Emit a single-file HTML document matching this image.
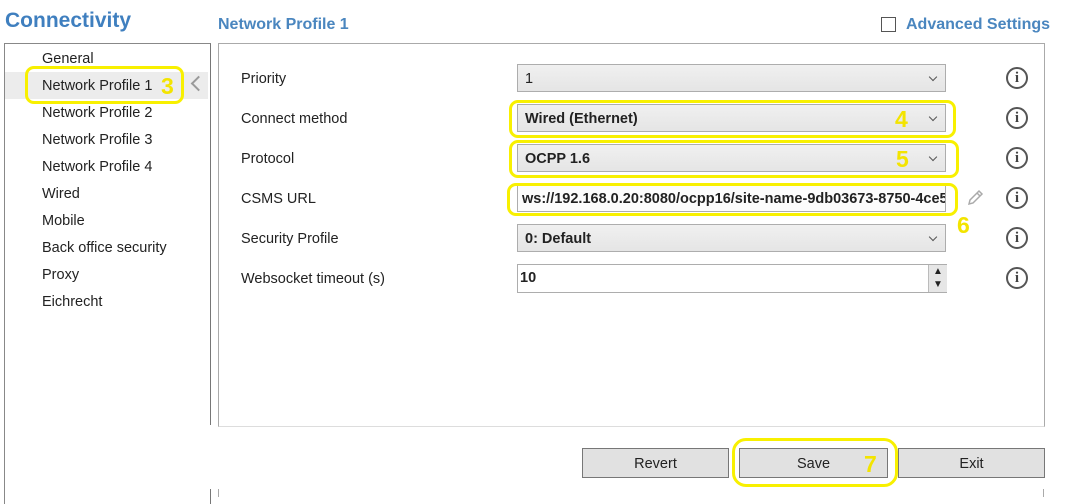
<!DOCTYPE html>
<html><head><style>
body{margin:0;width:1067px;height:497px;background:#fff;font-family:"Liberation Sans",sans-serif;position:relative;overflow:hidden;font-size:14.5px;color:#222}
.a{position:absolute}
.h1{left:5px;top:9px;font-size:21px;font-weight:bold;color:#3f7fbf}
.h2{left:218px;top:16px;font-size:16px;font-weight:bold;color:#4a86bf}
.nav{left:42px;font-size:14.5px}
.lbl{left:241px;font-size:14.5px}
.sel{left:517px;width:429px;height:28px;border:1px solid #adadad;background:linear-gradient(#f0f0f0,#e5e5e5);box-sizing:border-box;padding:6px 7px;font-size:14.5px}
.sel:after{content:"";position:absolute;right:9px;top:9px;width:5px;height:5px;border-right:1.3px solid #555;border-bottom:1.3px solid #555;transform:rotate(45deg)}
.info{left:1006px;width:18px;height:18px;border:2px solid #555;border-radius:50%;text-align:center;font:bold 15px/18px "Liberation Serif",serif;color:#444}
.y{border:3.5px solid #f8f000;border-radius:9px;box-sizing:border-box}
.num{color:#f3e400;font-weight:bold;font-size:23px}
.btn{top:448px;height:30px;background:#e1e1e1;border:1px solid #777;box-sizing:border-box;text-align:center;line-height:30px;font-size:14.5px}
</style></head><body>
<div class="a h1">Connectivity</div>
<div class="a h2">Network Profile 1</div>
<div class="a" style="left:881px;top:17px;width:13px;height:13px;border:1px solid #555"></div>
<div class="a" style="left:906px;top:16px;font-size:16px;font-weight:bold;color:#4a86bf">Advanced Settings</div>
<div class="a" style="left:4px;top:43px;width:205px;height:460px;border:1px solid #888;border-bottom:none;border-right-color:#777"></div>
<div class="a" style="left:209px;top:425px;width:3px;height:64px;background:#fff"></div>
<div class="a" style="left:5px;top:72px;width:203px;height:27px;background:#ececec"></div>
<div class="a" style="left:193px;top:78px;width:9px;height:9px;border-left:2.5px solid #999;border-bottom:2.5px solid #999;transform:rotate(45deg)"></div>
<div class="a nav" style="top:51px">General</div>
<div class="a nav" style="top:78px">Network Profile 1</div>
<div class="a nav" style="top:105px">Network Profile 2</div>
<div class="a nav" style="top:132px">Network Profile 3</div>
<div class="a nav" style="top:159px">Network Profile 4</div>
<div class="a nav" style="top:186px">Wired</div>
<div class="a nav" style="top:213px">Mobile</div>
<div class="a nav" style="top:240px">Back office security</div>
<div class="a nav" style="top:267px">Proxy</div>
<div class="a nav" style="top:294px">Eichrecht</div>
<div class="a y" style="left:25px;top:66px;width:159px;height:38px"></div>
<div class="a num" style="left:161px;top:73px">3</div>
<div class="a" style="left:218px;top:43px;width:825px;height:382px;border:1px solid #aaa;border-bottom-color:#ddd"></div>
<div class="a" style="left:218px;top:489px;width:1px;height:8px;background:#aaa"></div>
<div class="a" style="left:1043px;top:489px;width:1px;height:8px;background:#aaa"></div>
<div class="a lbl" style="top:71px">Priority</div>
<div class="a lbl" style="top:111px">Connect method</div>
<div class="a lbl" style="top:151px">Protocol</div>
<div class="a lbl" style="top:191px">CSMS URL</div>
<div class="a lbl" style="top:231px">Security Profile</div>
<div class="a lbl" style="top:271px">Websocket timeout (s)</div>
<div class="a sel" style="top:64px">1</div>
<div class="a sel" style="top:104px;font-weight:bold">Wired (Ethernet)</div>
<div class="a sel" style="top:144px;font-weight:bold">OCPP 1.6</div>
<div class="a" style="left:517px;top:184px;width:429px;height:28px;border:1px solid #adadad;box-sizing:border-box;padding:6px 4px;font-weight:bold;white-space:nowrap;overflow:hidden;background:#fcfcfc">ws://192.168.0.20:8080/ocpp16/site-name-9db03673-8750-4ce5</div>
<div class="a sel" style="top:224px;font-weight:bold">0: Default</div>
<div class="a" style="left:517px;top:264px;width:430px;height:29px;border:1px solid #adadad;box-sizing:border-box;padding:5px 2px;font-weight:bold">10</div>
<div class="a" style="left:928px;top:265px;width:18px;height:27px;background:#e6e6e6;border-left:1px solid #bbb;font-size:10px;text-align:center;line-height:13px">▲<br>▼</div>
<svg class="a" style="left:965px;top:188px" width="20" height="20" viewBox="0 0 20 20"><path d="M4 16 L5 12 L14 3 L17 6 L8 15 Z M12 5 L15 8" fill="none" stroke="#aaa" stroke-width="1.5"/></svg>
<div class="a info" style="top:67px">i</div>
<div class="a info" style="top:107px">i</div>
<div class="a info" style="top:147px">i</div>
<div class="a info" style="top:187px">i</div>
<div class="a info" style="top:227px">i</div>
<div class="a info" style="top:267px">i</div>
<div class="a y" style="left:509px;top:100px;width:447px;height:38px"></div>
<div class="a num" style="left:895px;top:106px">4</div>
<div class="a y" style="left:509px;top:140px;width:450px;height:38px"></div>
<div class="a num" style="left:896px;top:146px">5</div>
<div class="a y" style="left:507px;top:183px;width:451px;height:33px"></div>
<div class="a num" style="left:957px;top:212px">6</div>
<div class="a btn" style="left:582px;width:147px">Revert</div>
<div class="a btn" style="left:739px;width:149px">Save</div>
<div class="a btn" style="left:898px;width:147px">Exit</div>
<div class="a y" style="left:732px;top:438px;width:166px;height:49px;border-radius:14px"></div>
<div class="a num" style="left:864px;top:451px">7</div>
</body></html>
